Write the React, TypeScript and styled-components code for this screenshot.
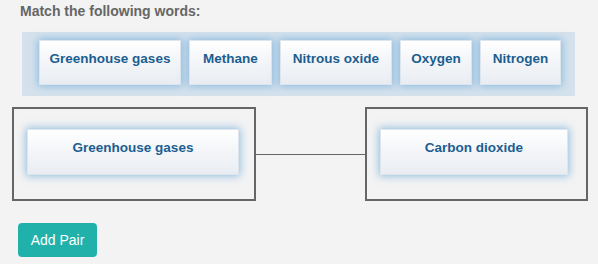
import styled, { createGlobalStyle } from "styled-components";

const GlobalStyle = createGlobalStyle`
  body {
    margin: 0;
    background: #f3f3f3;
    font-family: "Liberation Sans", Arial, sans-serif;
  }
`;

const Page = styled.div`
  width: 598px;
  height: 264px;
  padding-top: 3px;
  box-sizing: border-box;
`;

const Title = styled.div`
  margin-left: 20px;
  font-size: 14px;
  line-height: 16px;
  font-weight: bold;
  color: #666666;
`;

const WordBank = styled.div`
  display: flex;
  gap: 8px;
  margin: 13px 0 0 22px;
  width: 553px;
  box-sizing: border-box;
  padding: 8px 14px 11px 17px;
  background: #d5e2ed;
`;

const Chip = styled.div<{ $width: number; $height?: number }>`
  box-sizing: border-box;
  width: ${({ $width }) => $width}px;
  height: ${({ $height }) => $height ?? 45}px;
  padding-top: 10px;
  text-align: center;
  font-size: 13.5px;
  line-height: 16px;
  font-weight: bold;
  color: #1b5e91;
  white-space: nowrap;
  background: linear-gradient(to bottom, #ffffff 0%, #f3f5f8 50%, #e9edf2 100%);
  border: 1px solid #dde6ef;
  box-shadow: 0 0 8px 1px rgba(110, 170, 215, 0.75);
`;

const PairRow = styled.div`
  display: flex;
  align-items: center;
  margin: 11px 10px 0 12px;
`;

const PairBox = styled.div<{ $width: number }>`
  width: ${({ $width }) => $width}px;
  height: 94px;
  box-sizing: border-box;
  border: 2px solid #666666;
  padding: 20px 15px 0 13px;
`;

const Connector = styled.div`
  flex: 1;
  height: 1px;
  background: #666666;
`;

const AddButton = styled.button`
  margin: 22px 0 0 18px;
  width: 79px;
  height: 34px;
  border: none;
  border-radius: 4px;
  background: #20b2aa;
  color: #ffffff;
  font-family: "Liberation Sans", Arial, sans-serif;
  font-size: 14px;
  padding: 0;
  cursor: pointer;
`;

const words = [
  { text: "Greenhouse gases", width: 142 },
  { text: "Methane", width: 83 },
  { text: "Nitrous oxide", width: 112 },
  { text: "Oxygen", width: 72 },
  { text: "Nitrogen", width: 81 },
];

export default function App() {
  return (
    <Page>
      <GlobalStyle />
      <Title>Match the following words:</Title>
      <WordBank>
        {words.map((w) => (
          <Chip key={w.text} $width={w.width}>
            {w.text}
          </Chip>
        ))}
      </WordBank>
      <PairRow>
        <PairBox $width={244}>
          <Chip $width={212} $height={46}>Greenhouse gases</Chip>
        </PairBox>
        <Connector />
        <PairBox $width={223}>
          <Chip $width={188} $height={46}>Carbon dioxide</Chip>
        </PairBox>
      </PairRow>
      <AddButton>Add Pair</AddButton>
    </Page>
  );
}
